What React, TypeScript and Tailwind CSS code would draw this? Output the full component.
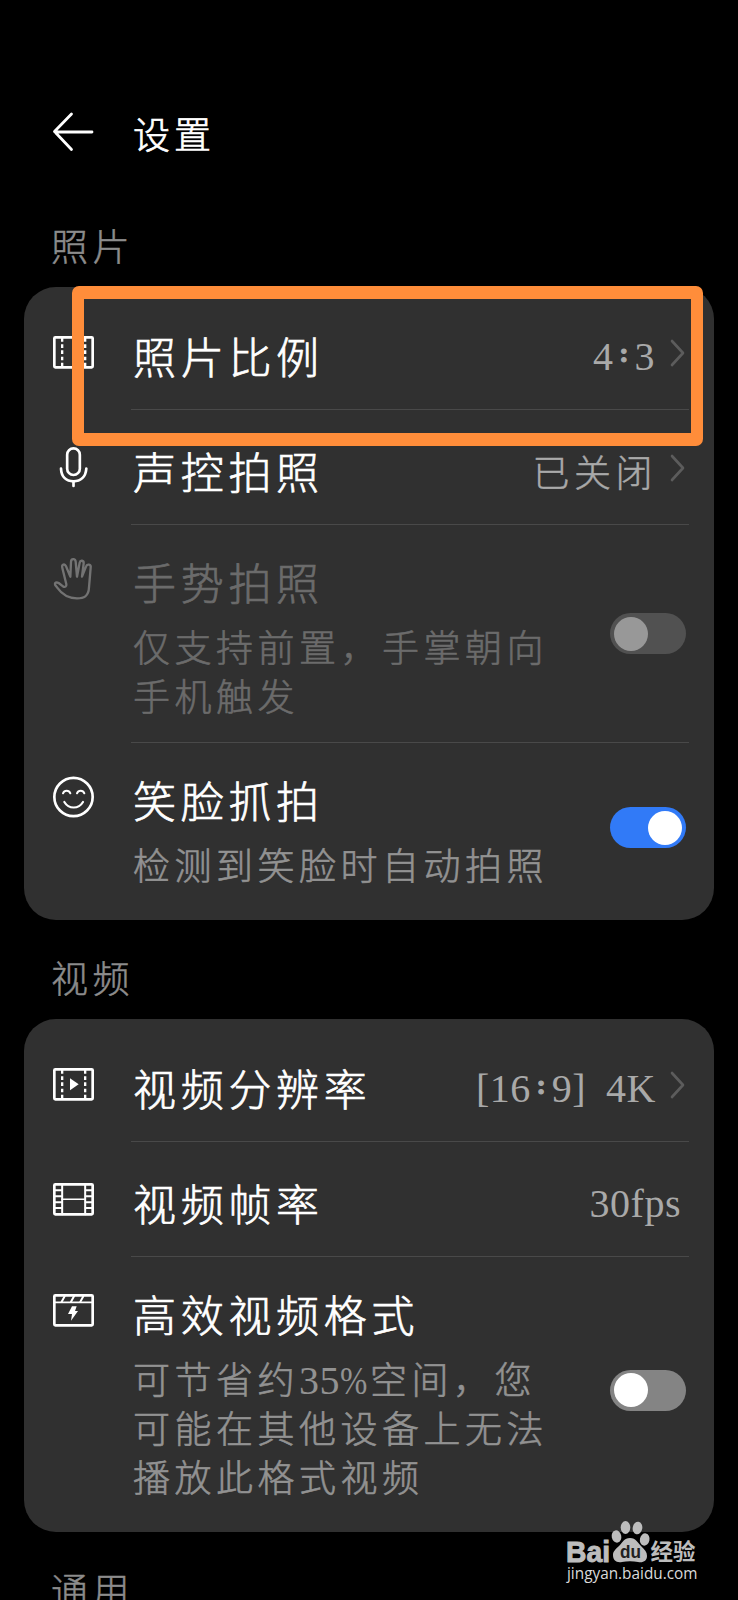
import type { ReactNode } from "react";

const cjk = "font-['Noto_Sans_CJK_SC',sans-serif]";
const serif = "font-['Liberation_Serif','Noto_Sans_CJK_SC',serif]";

function Icon({ children, className = "text-white" }: { children: ReactNode; className?: string }) {
  return (
    <svg
      viewBox="0 0 132 132"
      className={`-mt-[2px] size-11 shrink-0 ${className}`}
      fill="none"
      stroke="currentColor"
      strokeWidth="8"
      strokeLinecap="round"
      strokeLinejoin="round"
    >
      {children}
    </svg>
  );
}

const Frame = () => <rect x="7" y="22" width="115" height="90" rx="3" />;

const Perforation = () => (
  <path d="M30.500 22v90M99.500 22v90" strokeWidth="7" strokeLinecap="butt" strokeDasharray="13 8 11 7 11 8 11 7 14" />
);

const RatioIcon = () => (
  <Icon>
    <Frame />
    <Perforation />
  </Icon>
);

const PlayIcon = () => (
  <Icon>
    <Frame />
    <Perforation />
    <path d="M54 49L80 67L54 85Z" fill="currentColor" stroke="none" />
  </Icon>
);

const FilmIcon = () => (
  <Icon>
    <Frame />
    <path d="M30.500 22v90M99.500 22v90" strokeWidth="6" />
    <path d="M30 67h69" strokeWidth="4.500" />
    <path d="M8 40h20M8 58h20M8 76h20M8 93h20M101 40h20M101 58h20M101 76h20M101 93h20" strokeWidth="6" />
  </Icon>
);

const ClapperIcon = () => (
  <Icon>
    <Frame />
    <path d="M8 43h113" strokeWidth="5" />
    <path d="M29 41l9-16M57 41l9-16M85 41l9-16" strokeWidth="6" />
    <path d="M60 55h14l-5 14h9l-21 29l3-20h-12z" fill="currentColor" stroke="none" />
  </Icon>
);

const MicIcon = () => (
  <Icon>
    <rect x="45.500" y="10" width="38" height="80" rx="19" />
    <path d="M27 71c1 25 16 38 37.500 38S101 96 103 71" />
    <path d="M64.500 109v14" />
  </Icon>
);

const HandIcon = () => (
  <Icon className="text-[#737373]">
    <path
      strokeWidth="7"
      transform="translate(0 4)"
      d="M15 90L10 84C6 75 14 74 20 77L34 88C39 90 44 88 43 81L31 32C28 21 38 18 42 27L55 58L57 14C57 3 70 3 71 13L75 58L83 16C85 7 96 9 95 18L90 58L102 28C105 18 118 21 116 31L111 90C110 118 95 123 75 123C50 123 32 114 15 90Z"
    />
  </Icon>
);

const SmileIcon = () => (
  <Icon>
    <circle cx="64.500" cy="69" r="57.500" />
    <path d="M33 58c4-10 18-10 22 0M75 58c4-10 18-10 22 0" strokeWidth="6" />
    <path d="M37 84c13 22 43 22 56 0" strokeWidth="6.500" />
  </Icon>
);

function Chevron() {
  return (
    <svg viewBox="0 0 16 28" className="mt-px mr-1 ml-3 h-7 w-4" fill="none" stroke="#5c5c5c" strokeWidth="2.600" strokeLinecap="round" strokeLinejoin="round">
      <path d="M3 2L14 14L3 26" />
    </svg>
  );
}

const Ratio = () => (
  <span className="-mt-[4px] flex h-10 w-[21px] items-center justify-center text-[28px] leading-none font-bold tracking-normal [-webkit-text-stroke:1.2px_currentColor]">
    :
  </span>
);

function Value({ children }: { children: ReactNode }) {
  return <span className={`${serif} flex pt-[9px] pr-px text-[40px] leading-none tracking-[0.5px] text-[#a9a9a9]`}>{children}</span>;
}

function Switch({ on = false, disabled = false }: { on?: boolean; disabled?: boolean }) {
  const track = on ? "justify-end bg-[#317af7]" : disabled ? "bg-[#515151]" : "bg-[#848484]";
  return (
    <span className={`mr-[3px] flex h-[41px] w-[76px] items-center rounded-full px-1 ${track}`}>
      <span className={`size-[34px] rounded-full ${disabled ? "bg-[#989898]" : "bg-white"}`} />
    </span>
  );
}

function Title({ children, dim = false }: { children: ReactNode; dim?: boolean }) {
  return (
    <div
      className={`text-[43px] leading-[48px] font-light tracking-[4.700px] whitespace-nowrap [-webkit-text-stroke:0.7px_currentColor] ${dim ? "text-[#6b6b6b]" : "text-white"}`}
    >
      {children}
    </div>
  );
}

function Note({ lines, dim = false }: { lines: ReactNode[]; dim?: boolean }) {
  return (
    <div
      className={`mt-[17px] text-[37px] leading-[49px] font-light tracking-[4.500px] whitespace-nowrap [-webkit-text-stroke:0.6px_currentColor] ${dim ? "text-[#6b6b6b]" : "text-[#929292]"}`}
    >
      {lines.map((line, i) => (
        <div key={i} className="h-[49px]">
          {line}
        </div>
      ))}
    </div>
  );
}

function Row({ icon, title, children }: { icon: ReactNode; title: string; children: ReactNode }) {
  return (
    <div className="flex h-[115px] items-center">
      {icon}
      <div className="ml-[35px] flex h-full flex-1 items-center border-b border-[#494949]">
        <div className="ml-[2px] pt-[5px]">
          <Title>{title}</Title>
        </div>
        <div className="ml-auto flex items-center">{children}</div>
      </div>
    </div>
  );
}

function DetailRow({ icon, title, lines, toggle, height, dim = false, last = false }: {
  icon: ReactNode;
  title: string;
  lines: ReactNode[];
  toggle: ReactNode;
  height: string;
  dim?: boolean;
  last?: boolean;
}) {
  return (
    <div className={`flex ${height}`}>
      <div className="pt-[33px]">{icon}</div>
      <div className={`ml-[35px] flex flex-1 items-center justify-between ${last ? "" : "border-b border-[#494949]"}`}>
        <div className="ml-[2px] self-start pt-[32px]">
          <Title dim={dim}>{title}</Title>
          <Note lines={lines} dim={dim} />
        </div>
        {toggle}
      </div>
    </div>
  );
}

function Section({ label }: { label: string }) {
  return (
    <h2 className="h-[99px] pt-[33px] pl-[51px] text-[37px] leading-[49px] font-light tracking-[4.500px] text-[#8c8c8c] [-webkit-text-stroke:0.5px_currentColor]">
      {label}
    </h2>
  );
}

function Card({ children, className }: { children: ReactNode; className: string }) {
  return <section className={`mx-6 rounded-[32px] bg-[#303030] py-2 pr-[25px] pl-7 ${className}`}>{children}</section>;
}

function Watermark() {
  return (
    <svg viewBox="0 0 136 66" className="absolute top-[1518px] left-[564px] h-[66px] w-[136px]" fill="#bdbdbd">
      <text x="2" y="43.500" fontFamily="Liberation Sans" fontWeight="700" fontSize="30" textLength="44" lengthAdjust="spacingAndGlyphs" stroke="#bdbdbd" strokeWidth="1">
        Bai
      </text>
      <ellipse cx="52.500" cy="18.500" rx="4.800" ry="6.200" transform="rotate(-12 52.500 18.500)" />
      <ellipse cx="61.500" cy="9.500" rx="4.800" ry="6.500" />
      <ellipse cx="73.500" cy="10" rx="4.800" ry="6.300" transform="rotate(10 73.500 10)" />
      <ellipse cx="80.700" cy="21.500" rx="4.800" ry="6.200" transform="rotate(12 80.700 21.500)" />
      <path d="M66 20c6 0 8 5 11 8c4 4 6 6 6 10c0 5-4 7-9 6c-5-1-11-1-16 0c-6 1-9-2-9-7c0-4 3-6 6-9c4-4 5-8 11-8z" />
      <text x="56" y="40" fontFamily="Liberation Sans" fontWeight="700" fontSize="18" textLength="21" lengthAdjust="spacingAndGlyphs" fill="#202020">
        du
      </text>
      <text x="86.500" y="41.500" fontFamily="Noto Sans CJK SC" fontWeight="700" fontSize="22.500" textLength="45" lengthAdjust="spacingAndGlyphs">
        经验
      </text>
      <text x="3" y="60.500" fontFamily="Open Sans" fontSize="15.500" fontWeight="500" textLength="130.500" lengthAdjust="spacingAndGlyphs" fill="#dadada">
        jingyan.baidu.com
      </text>
    </svg>
  );
}

export default function App() {
  return (
    <main className={`${cjk} relative h-[1600px] w-[738px] overflow-hidden bg-black`}>
      <header className="flex h-[188px] items-center pt-[75px] pl-[52px]">
        <svg viewBox="0 0 44 44" className="size-11" fill="none" stroke="white" strokeWidth="2.800" strokeLinecap="round" strokeLinejoin="round">
          <path d="M19.500 4L2.500 21.500L19.500 39.500M3 22H40" />
        </svg>
        <h1 className="ml-[37px] pt-[4px] text-[37px] leading-[49px] font-light tracking-[4px] text-white [-webkit-text-stroke:0.7px_currentColor]">设置</h1>
      </header>

      <Section label="照片" />
      <Card className="h-[633px]">
        <Row icon={<RatioIcon />} title="照片比例">
          <span className="pr-px">
            <Value>4<Ratio />3</Value>
          </span>
          <Chevron />
        </Row>
        <Row icon={<MicIcon />} title="声控拍照">
          <span className="pt-[7px] text-[37px] leading-[48px] font-light tracking-[4.500px] text-[#a9a9a9] [-webkit-text-stroke:0.5px_currentColor]">已关闭</span>
          <Chevron />
        </Row>
        <DetailRow
          icon={<HandIcon />}
          title="手势拍照"
          lines={["仅支持前置，手掌朝向", "手机触发"]}
          toggle={<Switch disabled />}
          height="h-[218px]"
          dim
        />
        <DetailRow icon={<SmileIcon />} title="笑脸抓拍" lines={["检测到笑脸时自动拍照"]} toggle={<Switch on />} height="h-[169px]" last />
      </Card>

      <Section label="视频" />
      <Card className="h-[513px]">
        <Row icon={<PlayIcon />} title="视频分辨率">
          <Value>
            [16<Ratio />9]<span className="w-5" />4K
          </Value>
          <Chevron />
        </Row>
        <Row icon={<FilmIcon />} title="视频帧率">
          <span className="pr-[7px]">
            <Value>30fps</Value>
          </span>
        </Row>
        <DetailRow
          icon={<ClapperIcon />}
          title="高效视频格式"
          lines={[
            <>
              可节省约
              <span className={`${serif} text-[40px] leading-none tracking-[0.500px] [-webkit-text-stroke:0px]`}>
                35<span className="inline-block w-[30px] origin-left scale-x-[0.82] leading-none">%</span>
              </span>
              空间，您
            </>,
            "可能在其他设备上无法",
            "播放此格式视频",
          ]}
          toggle={<Switch />}
          height="h-[266px]"
          last
        />
      </Card>

      <Section label="通用" />

      <div className="absolute top-[286px] left-[72px] h-[160px] w-[631px] rounded-[7px] border-x-[12px] border-y-[13px] border-[#ff8d3a]" />
      <Watermark />
    </main>
  );
}
